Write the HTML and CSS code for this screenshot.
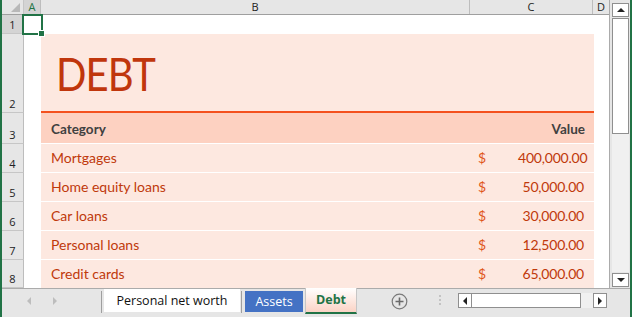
FILE: index.html
```html
<!DOCTYPE html>
<html>
<head>
<meta charset="utf-8">
<link rel="stylesheet" href="styles.css">
</head>
<body>
<div class="app">
  <div class="main">
    <div class="sheet">
      <div class="colheads">
        <div class="corner"><span class="tri"></span></div>
        <div class="ch ch-a">A</div>
        <div class="ch ch-b">B</div>
        <div class="ch ch-c">C</div>
        <div class="ch ch-d">D</div>
      </div>
      <div class="grid">
        <div class="row r1">
          <div class="rh rh-sel">1</div>
          <div class="ca"></div>
          <div class="cells blank"></div>
        </div>
        <div class="row r2">
          <div class="rh">2</div>
          <div class="ca"></div>
          <div class="cells title"><span class="debt">DEBT</span></div>
        </div>
        <div class="row r3">
          <div class="rh">3</div>
          <div class="ca"></div>
          <div class="cells head"><span class="cat">Category</span><span class="val">Value</span></div>
        </div>
        <div class="row rd">
          <div class="rh">4</div>
          <div class="ca"></div>
          <div class="cells data"><span class="cat">Mortgages</span><span class="dol">$</span><span class="num">400,000.00</span></div>
        </div>
        <div class="row rd">
          <div class="rh">5</div>
          <div class="ca"></div>
          <div class="cells data"><span class="cat">Home equity loans</span><span class="dol">$</span><span class="num">50,000.00</span></div>
        </div>
        <div class="row rd">
          <div class="rh">6</div>
          <div class="ca"></div>
          <div class="cells data"><span class="cat">Car loans</span><span class="dol">$</span><span class="num">30,000.00</span></div>
        </div>
        <div class="row rd">
          <div class="rh">7</div>
          <div class="ca"></div>
          <div class="cells data"><span class="cat">Personal loans</span><span class="dol">$</span><span class="num">12,500.00</span></div>
        </div>
        <div class="row rd last">
          <div class="rh">8</div>
          <div class="ca"></div>
          <div class="cells data"><span class="cat">Credit cards</span><span class="dol">$</span><span class="num">65,000.00</span></div>
        </div>
        <div class="selbox"><span class="handle"></span></div>
      </div>
    </div>
    <div class="vscroll">
      <div class="vbtn"><span class="up"></span></div>
      <div class="vtrack">
        <div class="vthumb"></div>
      </div>
      <div class="vbtn"><span class="down"></span></div>
    </div>
  </div>
  <div class="tabbar">
    <div class="nav"><span class="lt"></span><span class="rt"></span></div>
    <div class="tabs">
      <div class="sep sep1"></div>
      <div class="tab t-pnw">Personal net worth</div>
      <div class="sep sep2"></div>
      <div class="tab t-assets">Assets</div>
      <div class="tab t-debt">Debt</div>
    </div>
    <div class="plus">
      <svg width="17" height="17" viewBox="0 0 17 17"><circle cx="8.5" cy="8.5" r="7.3" fill="none" stroke="#7a7a7a" stroke-width="1.2"/><path d="M8.5 4.5v8M4.5 8.5h8" stroke="#6a6a6a" stroke-width="1.6"/></svg>
    </div>
    <div class="dots"><i></i><i></i><i></i></div>
    <div class="hscroll">
      <div class="hbtn"><span class="lt2"></span></div>
      <div class="hthumb"></div>
      <div class="htrack"></div>
      <div class="hbtn"><span class="rt2"></span></div>
    </div>
  </div>
</div>
</body>
</html>
```

FILE: styles.css
```css
* { box-sizing: border-box; }
html, body { margin: 0; padding: 0; }
body {
  width: 632px;
  height: 317px;
  overflow: hidden;
  background: #e6e6e6;
  font-family: "Open Sans", "Liberation Sans", sans-serif;
}
.app {
  width: 632px;
  height: 317px;
  display: flex;
  flex-direction: column;
  border-left: 2px solid #217346;
  border-right: 2px solid #217346;
  background: #e6e6e6;
}
.main {
  display: flex;
  height: 288px;
}
.sheet {
  width: 608px;
  display: flex;
  flex-direction: column;
  border-right: 1px solid #ababab;
}
.colheads {
  display: flex;
  height: 15px;
  background: #e6e6e6;
  border-bottom: 1px solid #9f9f9f;
  font-size: 11px;
  color: #222;
  line-height: 14px;
}
.corner {
  width: 22px;
  border-right: 1px solid #c6c6c6;
  position: relative;
}
.tri {
  position: absolute;
  right: 3px;
  bottom: 2px;
  width: 0; height: 0;
  border-left: 9px solid transparent;
  border-bottom: 9px solid #b8b8b8;
}
.ch {
  text-align: center;
  border-right: 1px solid #bdbdbd;
}
.ch-a { width: 17px; background: #d4d4d4; color: #217346; }
.ch-b { width: 429px; }
.ch-c { width: 123px; }
.ch-d { width: 16px; border-right: none; }
.grid {
  flex: 1;
  background: #fff;
  position: relative;
  display: flex;
  flex-direction: column;
}
.row {
  display: flex;
}
.rh {
  width: 22px;
  background: #e6e6e6;
  border-right: 1px solid #bdbdbd;
  border-bottom: 1px solid #c6c6c6;
  font-size: 11px;
  color: #222;
  text-align: center;
  display: flex;
  align-items: flex-end;
  justify-content: center;
  line-height: 14px;
  padding-bottom: 1px;
}
.rh-sel { background: #d4d4d4; }
.ca { width: 17px; }
.cells {
  width: 553px;
  font-family: "Lato", "Open Sans", sans-serif;
  font-size: 14px;
  display: flex;
  align-items: flex-end;
}
.r1 { height: 19px; }
.r1 .cells { background: #fff; }
.r2 { height: 79px; }
.title {
  background: #fde8e0;
  border-bottom: 2px solid #f4511e;
  padding-left: 15px;
  padding-bottom: 12px;
}
.debt {
  display: inline-block;
  font-size: 46px;
  color: #c0360c;
  letter-spacing: -1px;
  line-height: 50px;
  font-weight: 400;
  transform: scaleX(0.87);
  transform-origin: left bottom;
}
.r3 { height: 31px; }
.head {
  background: #fdd1c1;
  border-bottom: 1px solid #fff;
  padding: 0 9px 6px 10px;
  font-size: 13.5px;
  font-weight: 700;
  color: #404040;
  justify-content: space-between;
}
.rd { height: 29px; }
.rd.last { height: 28px; }
.data {
  background: #fde8e0;
  border-bottom: 1px solid #fff;
  padding: 0 10px 6px 10px;
  color: #c0390b;
}
.rd.last .data { border-bottom: none; }
.data .cat { flex: 1; }
.dol { width: 40px; color: #e0561a; }
.num { width: 66px; text-align: right; letter-spacing: -0.2px; }
.selbox {
  position: absolute;
  left: 20px;
  top: -1px;
  width: 21px;
  height: 21px;
  border: 2px solid #217346;
}
.handle {
  position: absolute;
  right: -4px;
  bottom: -4px;
  width: 5px;
  height: 5px;
  background: #217346;
  border: 1px solid #fff;
  box-sizing: content-box;
}
.vscroll {
  width: 20px;
  display: flex;
  flex-direction: column;
  padding: 3px 1px 1px 2px;
  background: #e6e6e6;
}
.vbtn {
  height: 14px;
  background: #fff;
  border: 1px solid #8f8f8f;
  display: flex;
  align-items: center;
  justify-content: center;
}
.up { width: 0; height: 0; border-left: 4px solid transparent; border-right: 4px solid transparent; border-bottom: 4px solid #222; }
.down { width: 0; height: 0; border-left: 4px solid transparent; border-right: 4px solid transparent; border-top: 4px solid #222; }
.vtrack {
  flex: 1;
  background: #f0f0f0;
  margin: 1px 0;
  display: flex;
  flex-direction: column;
}
.vthumb {
  height: 116px;
  background: #fff;
  border: 1px solid #8f8f8f;
}
.tabbar {
  height: 29px;
  display: flex;
  align-items: flex-start;
  border-top: 1px solid #ababab;
  background: #e6e6e6;
}
.nav {
  width: 99px;
  height: 24px;
  display: flex;
  align-items: center;
  gap: 22px;
  padding-left: 25px;
}
.lt { width: 0; height: 0; border-top: 4px solid transparent; border-bottom: 4px solid transparent; border-right: 4px solid #bdbdbd; }
.rt { width: 0; height: 0; border-top: 4px solid transparent; border-bottom: 4px solid transparent; border-left: 4px solid #bdbdbd; }
.tabs {
  display: flex;
  align-items: flex-start;
  height: 27px;
}
.sep {
  width: 1px;
  height: 22px;
  background: #9f9f9f;
  margin-top: 2px;
}
.sep1 { margin-left: 0; margin-right: 2px; }
.sep2 { margin-left: 1px; margin-right: 3px; }
.tab {
  height: 23px;
  font-size: 12.5px;
  line-height: 23px;
  padding: 0;
}
.t-pnw { background: #fff; color: #111; width: 136px; text-align: center; }
.t-assets { background: #4472c4; color: #fff; width: 58px; text-align: center; margin-top: 2px; height: 21px; line-height: 21px; }
.t-debt {
  width: 52px;
  margin-left: 2px;
  height: 26px;
  text-align: center;
  font-weight: 700;
  color: #217346;
  background: linear-gradient(#ffffff, #fbd3c5);
  border-bottom: 2px solid #217346;
  border-left: 1px solid #c6c6c6;
  border-right: 1px solid #c6c6c6;
  margin-top: -1px;
  line-height: 24px;
}
.plus {
  width: 40px;
  margin-left: 34px;
  padding-top: 4px;
  height: 24px;
}
.dots {
  width: 17px;
  display: flex;
  flex-direction: column;
  gap: 2px;
  padding-top: 6px;
  align-items: center;
}
.dots i { display: block; width: 2px; height: 2px; background: #c3c3c3; }
.hscroll {
  display: flex;
  margin-top: 4px;
  margin-left: 10px;
  height: 15px;
}
.hbtn {
  width: 14px;
  height: 15px;
  background: #fff;
  border: 1px solid #8f8f8f;
  display: flex;
  align-items: center;
  justify-content: center;
}
.lt2 { width: 0; height: 0; border-top: 4px solid transparent; border-bottom: 4px solid transparent; border-right: 4px solid #222; }
.rt2 { width: 0; height: 0; border-top: 4px solid transparent; border-bottom: 4px solid transparent; border-left: 4px solid #222; }
.hthumb {
  width: 109px;
  background: #fff;
  border: 1px solid #8f8f8f;
  border-left: none;
}
.htrack {
  width: 12px;
  background: #f0f0f0;
}
```
